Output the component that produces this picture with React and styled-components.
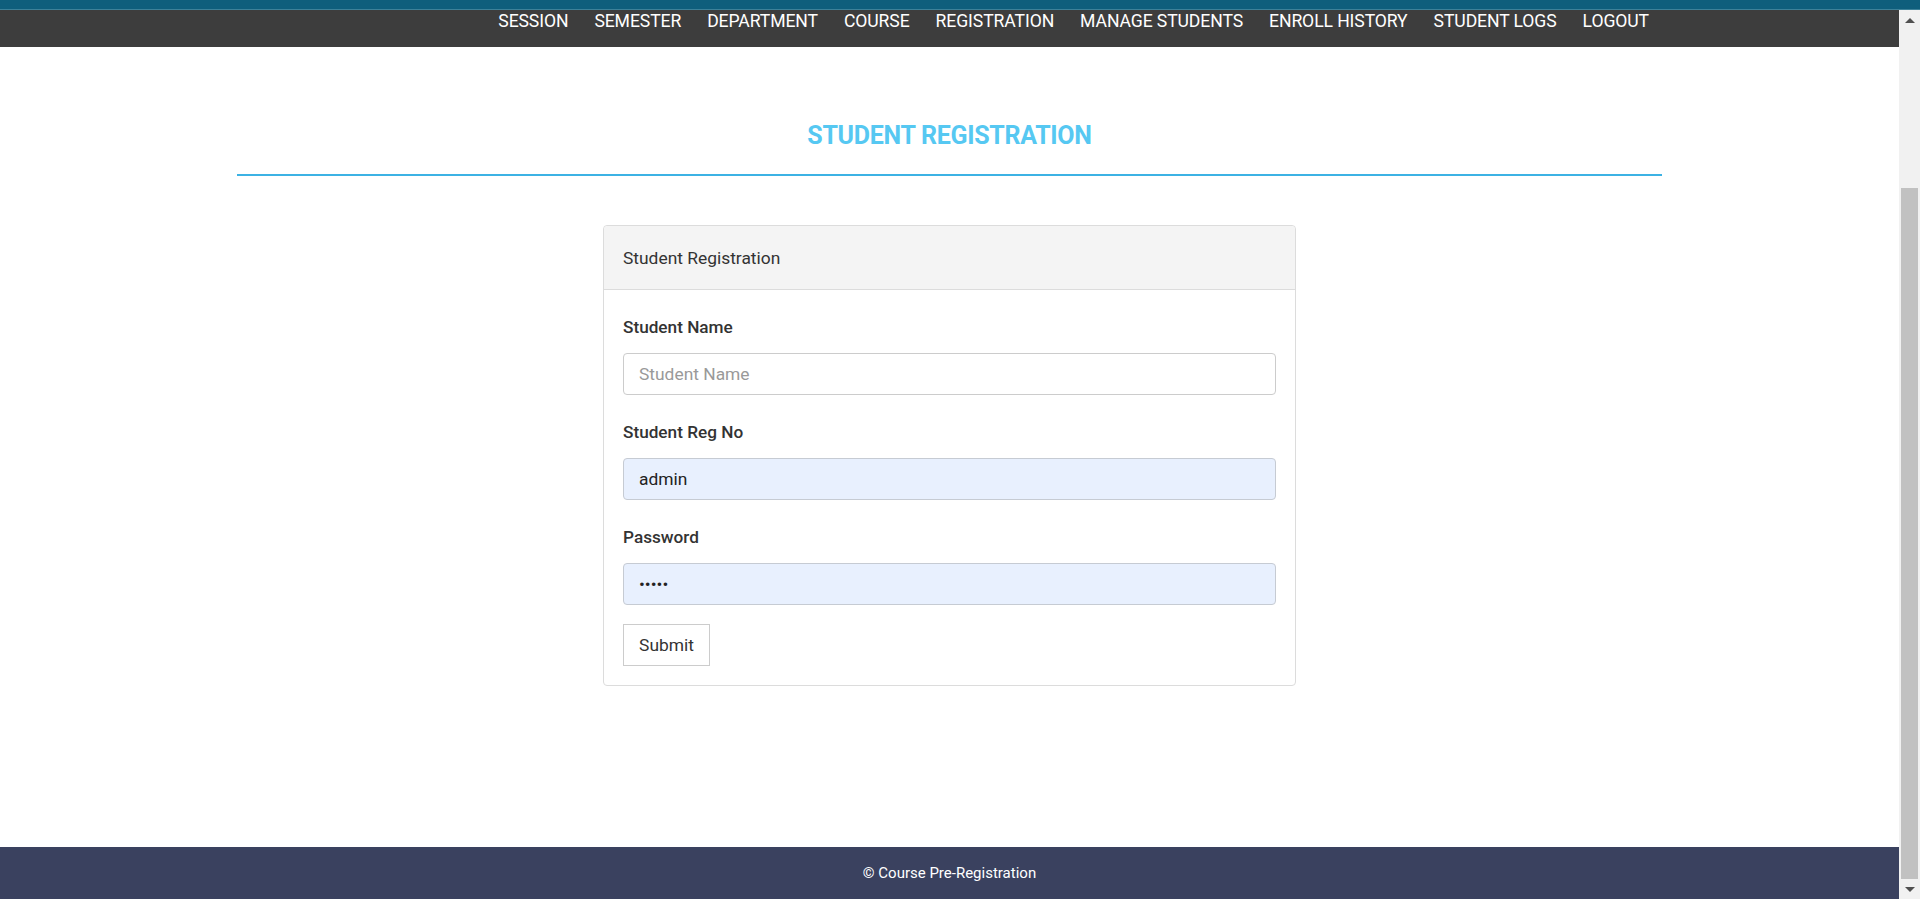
import React from 'react';
import styled, { createGlobalStyle } from 'styled-components';

const GlobalStyle = createGlobalStyle`
  html, body {
    margin: 0;
    padding: 0;
    height: 100%;
    overflow: hidden;
    font-family: Roboto, "Liberation Sans", sans-serif;
  }
  * {
    box-sizing: border-box;
  }
`;

const Shell = styled.div`
  height: 100vh;
  display: flex;
  flex-direction: column;
`;

const TopStrip = styled.div`
  height: 10px;
  flex-shrink: 0;
  background: #0f5e7c;
  border-bottom: 1px solid #3d8199;
`;

const Viewport = styled.div`
  flex: 1;
  display: flex;
  min-height: 0;
`;

const Page = styled.div`
  flex: 1;
  display: flex;
  flex-direction: column;
  min-width: 0;
`;

/* window scrollbar, drawn since the page is shown scrolled to its end */
const ScrollRail = styled.div`
  width: 21px;
  flex-shrink: 0;
  display: flex;
  flex-direction: column;
  background: #f1f1f1;
`;

const RailButton = styled.div`
  height: 20px;
  display: flex;
  align-items: center;
  justify-content: center;
  flex-shrink: 0;
`;

const Arrow = styled.span`
  width: 0;
  height: 0;
  border-left: 5px solid transparent;
  border-right: 5px solid transparent;
  ${p => (p.$down ? 'border-top: 5px solid #505050;' : 'border-bottom: 5px solid #505050;')}
`;

const RailGap = styled.div`
  height: 158px;
  flex-shrink: 0;
`;

const Thumb = styled.div`
  flex: 1;
  margin: 0 2px;
  background: #c1c1c1;
`;

const NavBar = styled.nav`
  height: 37px;
  flex-shrink: 0;
  background: #3d3d3d;
`;

const Container = styled.div`
  width: 1425px;
  margin: 0 auto;
`;

const NavList = styled.ul`
  list-style: none;
  margin: 0;
  padding: 0;
  display: flex;
  justify-content: flex-end;
`;

const NavItem = styled.li`
  padding: 1px 13px 0;
  line-height: 20px;
  font-size: 17.6px;
  color: #ffffff;
  text-transform: uppercase;
  letter-spacing: -0.1px;
`;

const Main = styled.main`
  flex: 1;
  padding-top: 74px;
`;

const Heading = styled.h1`
  margin: 0;
  text-align: center;
  font-size: 25px;
  line-height: 30px;
  font-weight: 700;
  color: #56c8f2;
  letter-spacing: -0.3px;
`;

const Divider = styled.hr`
  margin: 23px 0 0;
  border: 0;
  height: 2px;
  background: #3cb2e4;
`;

const Card = styled.section`
  width: 693px;
  margin: 49px auto 0;
  border: 1px solid #dcdcdc;
  border-radius: 4px;
  background: #fff;
`;

const CardHeader = styled.div`
  height: 64px;
  display: flex;
  align-items: center;
  padding: 0 19px;
  background: #f4f4f4;
  border-bottom: 1px solid #dcdcdc;
  border-radius: 4px 4px 0 0;
  font-size: 17.4px;
  color: #333;
`;

const CardBody = styled.form`
  padding: 26px 19px 19px;
`;

const Field = styled.div`
  margin-bottom: ${p => p.$spacing}px;
`;

const Label = styled.label`
  display: block;
  line-height: 22px;
  margin-bottom: 15px;
  font-size: 17.2px;
  font-weight: 500;
  color: #333;
`;

const Input = styled.input`
  display: block;
  width: 100%;
  height: 42px;
  padding: 0 15px;
  border: 1px solid ${p => (p.$filled ? '#c6cbd3' : '#cccccc')};
  border-radius: 4px;
  background: ${p => (p.$filled ? '#e8f0fe' : '#ffffff')};
  font-family: Roboto, "Liberation Sans", sans-serif;
  font-size: 17.4px;
  color: #222;
  outline: none;
  &::placeholder {
    color: #999;
  }
`;

const SubmitButton = styled.button`
  height: 42px;
  width: 87px;
  padding: 0;
  border: 1px solid #cccccc;
  border-radius: 0;
  background: #ffffff;
  font-family: Roboto, "Liberation Sans", sans-serif;
  font-size: 17.4px;
  color: #333;
`;

const Footer = styled.footer`
  height: 52px;
  flex-shrink: 0;
  display: flex;
  align-items: center;
  justify-content: center;
  background: #3a415f;
  color: #ffffff;
  font-size: 15px;
`;

const links = [
  'Session',
  'Semester',
  'Department',
  'Course',
  'Registration',
  'Manage Students',
  'Enroll History',
  'Student Logs',
  'Logout',
];

export default function App() {
  return (
    <Shell>
      <GlobalStyle />
      <TopStrip />
      <Viewport>
        <Page>
          <NavBar>
            <Container>
              <NavList>
                {links.map(l => (
                  <NavItem key={l}>{l}</NavItem>
                ))}
              </NavList>
            </Container>
          </NavBar>
          <Main>
            <Container>
              <Heading>STUDENT REGISTRATION</Heading>
              <Divider />
            </Container>
            <Card>
              <CardHeader>Student Registration</CardHeader>
              <CardBody onSubmit={e => e.preventDefault()}>
                <Field $spacing={26}>
                  <Label>Student Name</Label>
                  <Input placeholder="Student Name" />
                </Field>
                <Field $spacing={26}>
                  <Label>Student Reg No</Label>
                  <Input $filled defaultValue="admin" />
                </Field>
                <Field $spacing={19}>
                  <Label>Password</Label>
                  <Input $filled type="password" defaultValue="admin" />
                </Field>
                <SubmitButton type="submit">Submit</SubmitButton>
              </CardBody>
            </Card>
          </Main>
          <Footer>© Course Pre-Registration</Footer>
        </Page>
        <ScrollRail>
          <RailButton><Arrow /></RailButton>
          <RailGap />
          <Thumb />
          <RailButton><Arrow $down /></RailButton>
        </ScrollRail>
      </Viewport>
    </Shell>
  );
}
